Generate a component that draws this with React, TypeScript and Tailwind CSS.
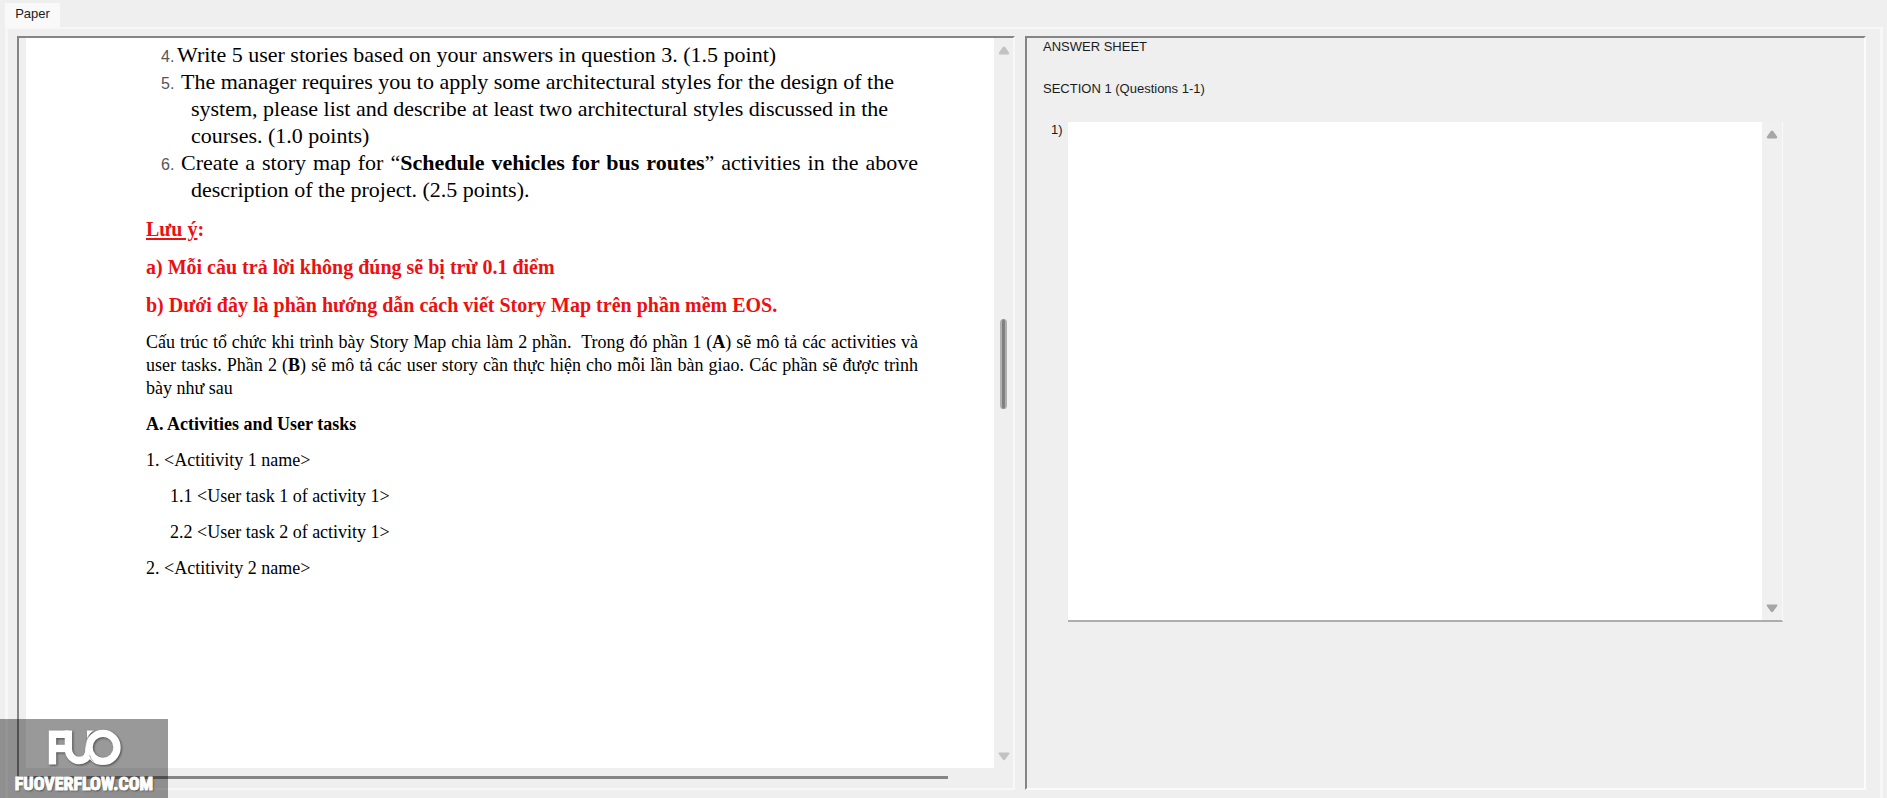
import type { ReactNode } from "react";

function Arrow({ up = false }: { up?: boolean }) {
  return (
    <svg viewBox="0 0 12 9" className="h-[9px] w-3" aria-hidden="true">
      <path
        d={up ? "M4.9 1.1Q6 0 7.1 1.1L11 6.6Q11.8 8.6 10 8.6H2Q.2 8.6 1 6.6Z" : "M1 .4H11Q11.8.4 11 2.2L7.2 7.6Q6 9 4.8 7.6L1 2.2Q.2.4 1 .4Z"}
        fill="currentColor"
      />
    </svg>
  );
}

function Question({ n, tight = false, children }: { n: number; tight?: boolean; children: ReactNode }) {
  return (
    <li className="pl-[45px] -indent-[30px]">
      <span
        className={`inline-block indent-0 font-['Liberation_Sans',Arial,sans-serif] text-base leading-none text-[#555] ${tight ? "w-4" : "w-5"}`}
      >
        {n}.
      </span>
      {children}
    </li>
  );
}

function Paper() {
  return (
    <article className="min-w-0 flex-1 overflow-hidden bg-white pt-[3px] font-['Liberation_Serif','Times_New_Roman',serif] text-black">
      <div className="ml-[120px] w-[772px]">
        <ol className="text-justify text-[22px] leading-[27px]">
          <Question n={4} tight>
            Write 5 user stories based on your answers in question 3. (1.5 point)
          </Question>
          <Question n={5}>
            The manager requires you to apply some architectural styles for the design of the
            <br />
            system, please list and describe at least two architectural styles discussed in the
            <br />
            courses. (1.0 points)
          </Question>
          <Question n={6}>
            Create a story map for “<b>Schedule vehicles for bus routes</b>” activities in the above description of
            the project. (2.5 points).
          </Question>
        </ol>
        <div className="mt-[7px] text-xl leading-[38px] font-bold text-[#ec1010]">
          <p>
            <span className="underline decoration-2 underline-offset-2">Lưu ý</span>:
          </p>
          <p>a) Mỗi câu trả lời không đúng sẽ bị trừ 0.1 điểm</p>
          <p>b) Dưới đây là phần hướng dẫn cách viết Story Map trên phần mềm EOS.</p>
        </div>
        <p className="mt-[7px] text-justify text-lg leading-[23px]">
          Cấu trúc tổ chức khi trình bày Story Map chia làm 2 phần.&nbsp; Trong đó phần 1 (<b>A</b>) sẽ mô tả các
          activities và user tasks. Phần 2 (<b>B</b>) sẽ mô tả các user story cần thực hiện cho mỗi lần bàn giao. Các
          phần sẽ được trình bày như sau
        </p>
        <div className="mt-1.5 text-lg leading-9">
          <h2 className="font-bold">A. Activities and User tasks</h2>
          <p>1. &lt;Actitivity 1 name&gt;</p>
          <p className="pl-6">1.1 &lt;User task 1 of activity 1&gt;</p>
          <p className="pl-6">2.2 &lt;User task 2 of activity 1&gt;</p>
          <p>2. &lt;Actitivity 2 name&gt;</p>
        </div>
      </div>
    </article>
  );
}

function Watermark() {
  return (
    <div className="absolute bottom-0 left-0 flex h-[79px] w-[168px] flex-col items-center bg-black/40 pt-[9px]">
      <svg viewBox="0 0 74 38" className="h-[38px] w-[74px] drop-shadow-[1px_1px_1px_rgba(0,0,0,0.5)]" role="img" aria-label="FUO">
        <g fill="none" stroke="#fff" strokeWidth="7.4">
          <path d="M5.5 36.5V6.2H22M5 20.5H19" />
          <path d="M21.4 2.5V21.5A11.2 11.2 0 0 0 32 32.5C40 32.5 42 27 42.2 20" />
          <circle cx="56" cy="19.4" r="14" />
        </g>
        <path d="M40 2.5H47Q41.5 5.5 40 12Z" fill="#fff" />
        <path d="M38.5 18.5Q39 8 46 3.4M42.6 27Q43.4 31 46.5 33.5" fill="none" stroke="#999" strokeWidth="0.8" />
      </svg>
      <span className="mt-1.5 font-['Liberation_Sans_Narrow','Roboto_Condensed','Open_Sans_Condensed',sans-serif] text-lg leading-6 font-bold whitespace-nowrap text-white [-webkit-text-stroke:1px_#fff] [text-shadow:1px_1px_2px_rgba(0,0,0,0.6)]">
        FUOVERFLOW.COM
      </span>
    </div>
  );
}

export default function App() {
  return (
    <div className="relative flex h-screen min-h-[680px] flex-col bg-[#efefef] font-['Liberation_Sans',Arial,sans-serif] text-[13px] text-[#1c1c1c]">
      <div role="tablist" className="flex pt-[3px] pl-[5px]">
        <button role="tab" aria-selected="true" className="h-6 w-[55px] bg-[#f9f9f9] pb-0.5 text-center leading-4">
          Paper
        </button>
      </div>
      <div
        role="tabpanel"
        className="mr-1 ml-[5px] grid min-h-0 flex-1 grid-cols-[998fr_841fr] gap-[10px] border-x-[3px] border-t-2 border-[#f7f7f7] pt-[7px] pr-[14px] pb-2 pl-[9px]"
      >
        <section className="flex min-h-0 flex-col border-2 border-t-[#858585] border-r-[#f8f8f8] border-b-[#f8f8f8] border-l-[#858585]">
          <div className="flex min-h-0 flex-1 pl-[7px]">
            <Paper />
            <div className="relative flex w-[19px] flex-col items-center justify-between pt-2 pb-[7px] text-[#c2c2c2]">
              <Arrow up />
              <div className="absolute top-[281px] h-[90px] w-[7px] rounded-full border-x-2 border-[#b0b0b0] bg-[#808080]" />
              <Arrow />
            </div>
          </div>
          <div className="h-5 pt-2">
            <div className="h-[3px] w-[929px] max-w-full bg-[#858585]" />
          </div>
        </section>
        <section className="min-h-0 overflow-hidden border-2 border-t-[#858585] border-r-[#fbfbfb] border-b-[#fbfbfb] border-l-[#858585] pl-4">
          <h1 className="leading-[18px]">ANSWER SHEET</h1>
          <h2 className="mt-6 leading-[18px]">SECTION 1 (Questions 1-1)</h2>
          <div className="mt-6 mr-[81px] flex">
            <label htmlFor="answer" className="w-[25px] pl-2 leading-4">
              1)
            </label>
            <div className="flex h-[500px] flex-1 border-r border-b-2 border-r-[#f8f8f8] border-b-[#adadad] bg-white">
              <textarea id="answer" className="min-w-0 flex-1 resize-none bg-white p-1 outline-none" />
              <div className="flex w-5 flex-col items-center justify-between bg-[#f0f0f0] pt-2 pb-[7px] text-[#a6a6a6]">
                <Arrow up />
                <Arrow />
              </div>
            </div>
          </div>
        </section>
      </div>
      <Watermark />
    </div>
  );
}
